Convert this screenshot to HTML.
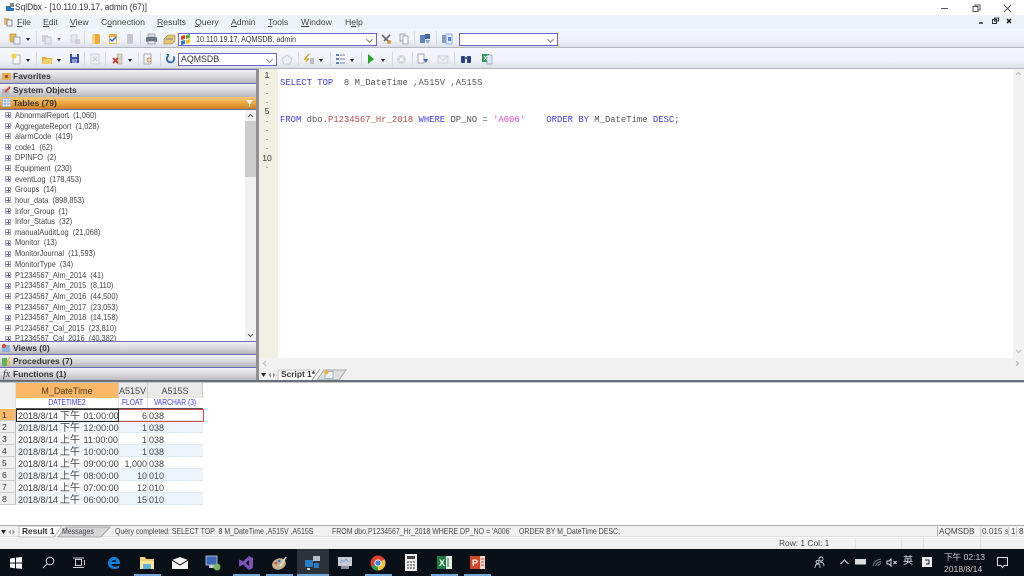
<!DOCTYPE html>
<html><head><meta charset="utf-8"><title>SqlDbx</title>
<style>
html,body{margin:0;padding:0;background:#fff;width:1024px;height:576px;overflow:hidden}
body{position:relative;font-family:"Liberation Sans","Noto Sans CJK TC",sans-serif;font-size:8.6px;color:#444;filter:blur(.35px)}
div,span,svg{box-sizing:border-box}
.a{position:absolute}
.t{position:absolute;white-space:pre;line-height:11px;height:11px}
.sl{transform-origin:left center}
.hd{position:absolute;left:0;width:256px;height:14px;background:linear-gradient(#f2f2f4,#d6d6da 55%,#b4b4ba);border-bottom:1px solid #6f6ab8;font-weight:bold;font-size:8.5px;color:#333;line-height:13px;padding-left:13px}
.ic{position:absolute;left:2px;top:2px;width:9px;height:9px}
.tr{position:absolute;left:15px;white-space:pre;line-height:11px;height:11px;color:#444;font-size:8.4px;transform:scaleX(.885);transform-origin:left center}
.ex{position:absolute;left:5px;width:6px;height:6px;border:1px solid #aaa;background:#f4f4f4}
.ex:after{content:"";position:absolute;left:1.500px;top:0;width:1px;height:4px;background:#668}
.ex:before{content:"";position:absolute;left:0;top:1.500px;width:4px;height:1px;background:#668}
.m{position:absolute;top:17px;line-height:11px;font-size:8.7px;color:#444;white-space:pre}
.m u{text-decoration:underline}
.bar{position:absolute;left:0;width:1024px;background:linear-gradient(#f3f6fb,#f0f3f9 60%,#dde0e6)}
.sep{position:absolute;width:1px;height:14px;background:#d5d8de}
.combo{position:absolute;background:#fff;border:1px solid #6a62cc;height:13px;line-height:11px;padding-left:3px;font-size:8.4px;color:#333;white-space:pre}
.combo:after{content:"";position:absolute;right:4px;top:3px;width:4px;height:4px;border-right:1px solid #888;border-bottom:1px solid #888;transform:rotate(45deg)}
.dd{position:absolute;width:0;height:0;border-left:2.5px solid transparent;border-right:2.5px solid transparent;border-top:3px solid #222}
.i{position:absolute}
pre{position:absolute;margin:0;font-family:"Liberation Mono",monospace;font-size:8.9px;line-height:11px;color:#555;white-space:pre}
.k{color:#3f3fe0}.r{color:#b24a4a}.s{color:#e04ad8}
.ln{position:absolute;left:259px;width:20px;text-align:center;font-size:8.6px;color:#333;line-height:10px;padding-right:4px}
.c{position:absolute;font-size:9px;color:#444;line-height:12px;height:12px;white-space:pre;font-family:"Liberation Sans","Noto Sans CJK TC",sans-serif}
.c b{font-weight:normal;font-size:10px;margin:0 1px 0 2px}
.ty{color:#3a3ae8;font-size:7.8px;transform:scaleX(.86)}
.rw{position:absolute;left:16px;width:187px;height:12px;border-bottom:1px solid #dfe6ee}
.rh{position:absolute;left:0;width:16px;height:12px;background:#efefef;border-bottom:1px solid #ccc;border-right:1px solid #bbb;font-size:8.6px;color:#333;line-height:13px;padding-left:2px}
.ul{position:absolute;top:574px;height:2px;background:#6fa8d8}
.st{font-size:8.2px;transform:scaleX(.85);transform-origin:left center}
</style></head><body>

<!-- title bar -->
<svg class="i" style="left:5px;top:2px" width="11" height="11"><rect x="5" y="1" width="4" height="4" fill="#888"/><rect x="1" y="4" width="5" height="5" fill="#2a70c0"/><rect x="6" y="6" width="3" height="3" fill="#2a70c0"/></svg>
<div class="t sl" style="left:15px;top:2px;font-size:9.3px;color:#333;transform:scaleX(.9)">SqlDbx - [10.110.19.17, admin (67)]</div>
<svg class="i" style="left:930px;top:2px" width="94" height="12" fill="none" stroke="#555" stroke-width="1"><path d="M11 6.500h7"/><path d="M43 4.500h5v5h-5z M45 4.500v-1.500h5v5h-2" /><path d="M74 3l7 7M81 3l-7 7"/></svg>

<!-- menu bar -->
<div class="a" style="left:0;top:15px;width:1024px;height:14px;background:#eef3fa"></div>
<svg class="i" style="left:3px;top:17px" width="11" height="10"><rect x="1" y="1" width="5" height="7" fill="#e6b860"/><rect x="4" y="3" width="5" height="6" fill="#f4f4f4" stroke="#889"/></svg>
<div class="m" style="left:17px"><u>F</u>ile</div>
<div class="m" style="left:43px"><u>E</u>dit</div>
<div class="m" style="left:70px"><u>V</u>iew</div>
<div class="m" style="left:101px">C<u>o</u>nnection</div>
<div class="m" style="left:157px"><u>R</u>esults</div>
<div class="m" style="left:195px"><u>Q</u>uery</div>
<div class="m" style="left:231px"><u>A</u>dmin</div>
<div class="m" style="left:268px"><u>T</u>ools</div>
<div class="m" style="left:301px"><u>W</u>indow</div>
<div class="m" style="left:345px">H<u>e</u>lp</div>
<svg class="i" style="left:975px;top:17px" width="40" height="9"><path d="M4 6h4" stroke="#222" stroke-width="1.4"/><rect x="17.500" y="2.500" width="4" height="4" fill="none" stroke="#333"/><rect x="19.500" y="1" width="4" height="3" fill="none" stroke="#333"/><path d="M32 2l4 4M36 2l-4 4" stroke="#111" stroke-width="1.500"/></svg>

<!-- toolbar 1 -->
<div class="bar" style="top:29px;height:19px;border-bottom:1px solid #b5b8bf"></div>
<svg class="i" style="left:9px;top:33px" width="14" height="12"><rect x="1" y="1" width="6" height="8" fill="#e8b850" stroke="#b08a30" stroke-width=".6"/><rect x="5" y="4" width="6" height="7" fill="#f3f5f8" stroke="#7d93b8" stroke-width=".8"/></svg>
<div class="dd" style="left:26px;top:38px"></div>
<div class="sep" style="left:36px;top:31px"></div>
<svg class="i" style="left:41px;top:33px" width="12" height="12"><rect x="1" y="2" width="6" height="7" fill="#d0d4dc"/><rect x="4" y="4" width="6" height="7" fill="#e4e6ea" stroke="#b8bcc4" stroke-width=".7"/></svg>
<div class="dd" style="left:57px;top:38px;border-top-color:#777"></div>
<svg class="i" style="left:69px;top:33px" width="12" height="12"><rect x="2" y="2" width="6" height="7" fill="#e6e8ec" stroke="#c4c7cd" stroke-width=".7"/><rect x="6" y="6" width="5" height="5" fill="#ced1d6"/></svg>
<div class="sep" style="left:84px;top:31px"></div>
<svg class="i" style="left:90px;top:33px" width="12" height="12"><rect x="2" y="1" width="8" height="10" rx="2" fill="#e9ac3a"/><rect x="2" y="1" width="3" height="10" rx="1" fill="#f6d37e"/></svg>
<svg class="i" style="left:107px;top:33px" width="12" height="12"><rect x="2" y="1" width="8" height="10" rx="1" fill="#e6b040"/><rect x="3" y="4" width="6" height="6" fill="#eef2fa"/><path d="M3 6l2 2 4-4" stroke="#3060c0" stroke-width="1.400" fill="none"/></svg>
<svg class="i" style="left:125px;top:33px" width="10" height="12"><rect x="2" y="1" width="6" height="10" rx="1" fill="#c4c7cd"/></svg>
<div class="sep" style="left:140px;top:31px"></div>
<svg class="i" style="left:145px;top:33px" width="13" height="12"><rect x="3" y="1" width="7" height="3" fill="#dfe1e5" stroke="#778" stroke-width=".6"/><rect x="1" y="4" width="11" height="5" rx="1" fill="#6e7480"/><rect x="3" y="8" width="7" height="3" fill="#eee" stroke="#778" stroke-width=".6"/></svg>
<svg class="i" style="left:163px;top:33px" width="13" height="12"><path d="M1 6l4-4h7v6l-3 3H1z" fill="#e6c470" stroke="#a08a50" stroke-width=".6"/><path d="M3 6h7" stroke="#889"/></svg>
<div class="combo" style="left:178px;top:33px;width:199px;padding-left:17px"><span style="display:inline-block;transform:scaleX(.86);transform-origin:left center">10.110.19.17, AQMSDB, admin</span></div>
<svg class="i" style="left:180px;top:34px" width="11" height="11"><path d="M1 2l4-1v4l-4 1z" fill="#e0442c"/><path d="M6 1l4-1v4l-4 1z" fill="#5eb030"/><path d="M1 7l4-1v4l-4 1z" fill="#2c78d8"/><path d="M6 6l4-1v4l-4 1z" fill="#f0c020"/></svg>
<svg class="i" style="left:380px;top:33px" width="13" height="12"><path d="M2 2l8 8M10 2l-6 6" stroke="#667" stroke-width="1.600"/><circle cx="9" cy="9" r="2" fill="#c9a040"/></svg>
<svg class="i" style="left:398px;top:33px" width="12" height="12"><rect x="2" y="1" width="5" height="7" fill="#eee" stroke="#889" stroke-width=".7"/><rect x="5" y="3" width="5" height="8" fill="#fbfbfb" stroke="#889" stroke-width=".7"/></svg>
<div class="sep" style="left:414px;top:31px"></div>
<svg class="i" style="left:419px;top:33px" width="12" height="12"><rect x="1" y="2" width="5" height="8" fill="#5f84c4"/><rect x="6" y="1" width="5" height="5" fill="#3f68b0"/><path d="M6 7l3 4 2-4z" fill="#8aa6d8"/></svg>
<div class="sep" style="left:436px;top:31px"></div>
<svg class="i" style="left:441px;top:33px" width="12" height="12"><rect x="1" y="2" width="5" height="8" fill="#7a9ad0"/><rect x="5" y="1" width="6" height="10" fill="#dfe7f5" stroke="#7a9ad0" stroke-width=".7"/><path d="M7 4h3v4H7z" fill="#5f84c4"/></svg>
<div class="combo" style="left:459px;top:33px;width:99px"></div>

<!-- toolbar 2 -->
<div class="bar" style="top:48px;height:21px;border-bottom:1px solid #b5b8bf"></div>
<svg class="i" style="left:10px;top:53px" width="13" height="12"><rect x="3" y="2" width="7" height="9" fill="#f5f6f8" stroke="#99a" stroke-width=".7"/><circle cx="4" cy="3" r="2.500" fill="#f4d040"/></svg>
<div class="dd" style="left:26px;top:59px"></div>
<div class="sep" style="left:36px;top:52px"></div>
<svg class="i" style="left:41px;top:53px" width="13" height="12"><path d="M1 4h4l1 1h5v6H1z" fill="#e2b040"/><path d="M3 6h9l-2 5H1z" fill="#f2d070"/></svg>
<div class="dd" style="left:57px;top:59px"></div>
<svg class="i" style="left:69px;top:53px" width="11" height="11"><rect x="1" y="1" width="9" height="9" fill="#3c4fa8"/><rect x="3" y="1" width="5" height="3" fill="#dfe4f2"/><rect x="3" y="6" width="5" height="4" fill="#8c9ad0"/></svg>
<div class="sep" style="left:84px;top:52px"></div>
<svg class="i" style="left:90px;top:53px" width="10" height="12"><rect x="1" y="1" width="8" height="10" fill="#eceef2" stroke="#c8cbd2" stroke-width=".7"/><path d="M3 4l4 4M7 4l-4 4" stroke="#ccc"/></svg>
<div class="sep" style="left:105px;top:52px"></div>
<svg class="i" style="left:112px;top:53px" width="12" height="12"><rect x="5" y="1" width="5" height="10" fill="#d6d2c4" stroke="#998" stroke-width=".5"/><path d="M1 5l5 5M6 5l-5 5" stroke="#d83020" stroke-width="1.600"/></svg>
<div class="dd" style="left:128px;top:59px"></div>
<div class="sep" style="left:138px;top:52px"></div>
<svg class="i" style="left:142px;top:53px" width="12" height="12"><rect x="2" y="1" width="7" height="10" fill="#f8f8fa" stroke="#889" stroke-width=".7"/><circle cx="7" cy="7" r="2" fill="#dfe8f4" stroke="#c09030"/></svg>
<div class="sep" style="left:160px;top:52px"></div>
<svg class="i" style="left:165px;top:53px" width="11" height="11" fill="none"><path d="M8.500 3.500A3.700 3.700 0 1 1 3 3" stroke="#2a64c0" stroke-width="1.800"/><path d="M1 1l3 0 0 3z" fill="#2a64c0"/></svg>
<div class="combo" style="left:178px;top:53px;width:99px;font-size:8.8px;padding-left:2px">AQMSDB</div>
<svg class="i" style="left:281px;top:54px" width="13" height="11"><path d="M6 1l5 4-2 5H3L1 5z" fill="#eceef2" stroke="#c9ccd2"/></svg>
<div class="sep" style="left:298px;top:52px"></div>
<svg class="i" style="left:303px;top:53px" width="13" height="12"><path d="M6 1L2 6h3L3 9" stroke="#e0a820" stroke-width="1.500" fill="none"/><path d="M7 6h4M7 8h4M7 10h4" stroke="#889"/></svg>
<div class="dd" style="left:319px;top:59px"></div>
<div class="sep" style="left:330px;top:52px"></div>
<svg class="i" style="left:335px;top:53px" width="11" height="12"><rect x="1" y="1" width="3" height="2" fill="#5a80c0"/><rect x="1" y="5" width="3" height="2" fill="#5a80c0"/><rect x="1" y="9" width="3" height="2" fill="#5a80c0"/><path d="M5 2h5M5 6h5M5 10h5" stroke="#aab" stroke-width="1.500"/></svg>
<div class="dd" style="left:350px;top:59px"></div>
<div class="sep" style="left:361px;top:52px"></div>
<svg class="i" style="left:366px;top:53px" width="10" height="12"><path d="M2 1l6 5-6 5z" fill="#2aa02a"/></svg>
<div class="dd" style="left:381px;top:59px"></div>
<div class="sep" style="left:392px;top:52px"></div>
<svg class="i" style="left:396px;top:54px" width="11" height="11"><circle cx="5.500" cy="5.500" r="4.500" fill="#d5d6da"/><path d="M3.500 3.500l4 4M7.500 3.500l-4 4" stroke="#fff"/></svg>
<div class="sep" style="left:412px;top:52px"></div>
<svg class="i" style="left:417px;top:53px" width="12" height="12"><rect x="1" y="1" width="6" height="9" fill="#f8f8fb" stroke="#889" stroke-width=".7"/><path d="M6 6l5 0-2 4z" fill="#3a6cb8"/></svg>
<svg class="i" style="left:437px;top:54px" width="12" height="11"><rect x="1" y="2" width="10" height="7" fill="#eceef2" stroke="#cfd2d8"/><path d="M1 2l5 4 5-4" stroke="#d5d8de" fill="none"/></svg>
<div class="sep" style="left:454px;top:52px"></div>
<svg class="i" style="left:460px;top:54px" width="12" height="10"><rect x="1" y="2" width="4" height="7" rx="1" fill="#2a4080"/><rect x="7" y="2" width="4" height="7" rx="1" fill="#2a4080"/><rect x="4" y="3" width="4" height="2" fill="#405aa0"/></svg>
<svg class="i" style="left:481px;top:53px" width="12" height="12"><rect x="1" y="1" width="7" height="8" fill="#2f9a4a"/><rect x="6" y="2" width="5" height="9" fill="#dfe6f4" stroke="#7d93b8" stroke-width=".6"/><path d="M3 3l3 4M6 3l-3 4" stroke="#fff" stroke-width=".8"/></svg>

<!-- left panel -->
<div class="a" style="left:0;top:69px;width:256px;height:1px;background:#6f6ab8"></div>
<div class="hd" style="top:70px">Favorites<svg class="ic" viewBox="0 0 9 9"><rect x="0" y="1" width="9" height="7" fill="#dcb050"/><circle cx="4.500" cy="4.500" r="1.500" fill="#b03030"/></svg></div>
<div class="hd" style="top:84px">System Objects<svg class="ic" viewBox="0 0 9 9"><rect x="0" y="3" width="7" height="6" fill="#b4b8c4"/><path d="M3 6l5-5" stroke="#d84830" stroke-width="2"/></svg></div>
<div class="hd" style="top:97px;height:13px;background:linear-gradient(#f7c878,#eaa038 60%,#c88020);border-bottom:1px solid #6f6ab8;line-height:12px">Tables (79)<svg class="ic" style="top:1px" viewBox="0 0 9 9"><rect x="0" y="0" width="9" height="9" fill="#fff" stroke="#7a90c0"/><path d="M0 3h9M0 6h9M3 0v9M6 0v9" stroke="#7a90c0" stroke-width=".7"/></svg><svg class="a" style="left:246px;top:3px" width="7" height="7"><path d="M0 0h7L4 4v3H3V4z" fill="#f4f4f4"/></svg></div>

<div class="a" style="left:0;top:110px;width:256px;height:231px;overflow:hidden;background:#fff">
<div class="ex" style="top:2px"></div><div class="tr" style="top:0px">AbnormalReport  (1,060)</div>
<div class="ex" style="top:13px"></div><div class="tr" style="top:11px">AggregateReport  (1,028)</div>
<div class="ex" style="top:23px"></div><div class="tr" style="top:21px">alarmCode  (419)</div>
<div class="ex" style="top:34px"></div><div class="tr" style="top:32px">code1  (62)</div>
<div class="ex" style="top:45px"></div><div class="tr" style="top:42px">DPINFO  (2)</div>
<div class="ex" style="top:55px"></div><div class="tr" style="top:53px">Equipment  (230)</div>
<div class="ex" style="top:66px"></div><div class="tr" style="top:64px">eventLog  (178,453)</div>
<div class="ex" style="top:77px"></div><div class="tr" style="top:74px">Groups  (14)</div>
<div class="ex" style="top:87px"></div><div class="tr" style="top:85px">hour_data  (898,853)</div>
<div class="ex" style="top:98px"></div><div class="tr" style="top:96px">Infor_Group  (1)</div>
<div class="ex" style="top:109px"></div><div class="tr" style="top:106px">Infor_Status  (32)</div>
<div class="ex" style="top:119px"></div><div class="tr" style="top:117px">manualAuditLog  (21,068)</div>
<div class="ex" style="top:130px"></div><div class="tr" style="top:127px">Monitor  (13)</div>
<div class="ex" style="top:141px"></div><div class="tr" style="top:138px">MonitorJournal  (11,593)</div>
<div class="ex" style="top:151px"></div><div class="tr" style="top:149px">MonitorType  (34)</div>
<div class="ex" style="top:162px"></div><div class="tr" style="top:160px">P1234567_Alm_2014  (41)</div>
<div class="ex" style="top:173px"></div><div class="tr" style="top:170px">P1234567_Alm_2015  (8,110)</div>
<div class="ex" style="top:183px"></div><div class="tr" style="top:181px">P1234567_Alm_2016  (44,500)</div>
<div class="ex" style="top:194px"></div><div class="tr" style="top:192px">P1234567_Alm_2017  (23,053)</div>
<div class="ex" style="top:205px"></div><div class="tr" style="top:202px">P1234567_Alm_2018  (14,158)</div>
<div class="ex" style="top:215px"></div><div class="tr" style="top:213px">P1234567_Cal_2015  (23,810)</div>
<div class="ex" style="top:226px"></div><div class="tr" style="top:223px">P1234567_Cal_2016  (40,382)</div>
<!-- tree scrollbar -->
<div class="a" style="left:245px;top:0;width:11px;height:231px;background:#f1f1f1"></div>
<div class="a" style="left:245px;top:11px;width:11px;height:56px;background:#cdcdcd"></div>
<svg class="a" style="left:247px;top:3px" width="7" height="5" fill="none" stroke="#555"><path d="M1 4l2.500-2.500L6 4"/></svg>
<svg class="a" style="left:247px;top:223px" width="7" height="5" fill="none" stroke="#555"><path d="M1 1l2.500 2.500L6 1"/></svg>
</div>

<div class="hd" style="top:341px;height:14px;border-top:1px solid #6f6ab8">Views  (0)<svg class="ic" viewBox="0 0 9 9"><rect x="0" y="1" width="8" height="7" fill="#8fb0dc"/><circle cx="2" cy="2" r="2" fill="#d84830"/></svg></div>
<div class="hd" style="top:355px;height:13px">Procedures  (7)<svg class="ic" viewBox="0 0 9 9"><rect x="0" y="1" width="5" height="8" fill="#60b060"/><path d="M8 0L5 5h3L6 9" stroke="#e0b020" fill="none"/></svg></div>
<div class="hd" style="top:368px;height:13px;border-bottom:none">Functions  (1)<span class="a" style="left:3px;top:0;font-family:'Liberation Serif',serif;font-style:italic;font-size:10px;font-weight:normal">fx</span></div>

<!-- splitter -->
<div class="a" style="left:256px;top:69px;width:3px;height:312px;background:#8e9096"></div>

<!-- gutter + editor -->
<div class="a" style="left:259px;top:69px;width:19px;height:289px;background:#f2f0e1"></div>
<div class="ln" style="top:70px">1</div>
<div class="ln" style="top:79px">&middot;</div>
<div class="ln" style="top:88px">&middot;</div>
<div class="ln" style="top:97px">&middot;</div>
<div class="ln" style="top:106px">5</div>
<div class="ln" style="top:116px">&middot;</div>
<div class="ln" style="top:125px">&middot;</div>
<div class="ln" style="top:134px">&middot;</div>
<div class="ln" style="top:143px">&middot;</div>
<div class="ln" style="top:153px">10</div>
<div class="ln" style="top:162px">&middot;</div>
<pre style="left:280px;top:78px"><span class="k">SELECT TOP</span>  8 M_DateTime ,A515V ,A515S</pre>
<pre style="left:280px;top:115px"><span class="k">FROM</span> dbo.<span class="r">P1234567_Hr_2018</span> <span class="k">WHERE</span> DP_NO = <span class="s">'A006'</span>    <span class="k">ORDER BY</span> M_DateTime <span class="k">DESC</span>;</pre>

<!-- editor scrollbars -->
<div class="a" style="left:1013px;top:69px;width:11px;height:289px;background:#f2f2f2"></div>
<svg class="a" style="left:1015px;top:71px" width="7" height="5" fill="none" stroke="#bbb"><path d="M1 4l2.500-2.500L6 4"/></svg>
<svg class="a" style="left:1015px;top:349px" width="7" height="5" fill="none" stroke="#bbb"><path d="M1 1l2.500 2.500L6 1"/></svg>
<div class="a" style="left:259px;top:358px;width:765px;height:11px;background:#f2f2f2"></div>
<svg class="a" style="left:262px;top:360px" width="5" height="7" fill="none" stroke="#bbb"><path d="M4 1L1.500 3.500 4 6"/></svg>
<svg class="a" style="left:1015px;top:360px" width="5" height="7" fill="none" stroke="#bbb"><path d="M1 1l2.500 2.500L1 6"/></svg>

<!-- script tabs -->
<div class="a" style="left:259px;top:369px;width:765px;height:11px;background:#f0f0f0"></div>
<svg class="a" style="left:259px;top:369px" width="120" height="12"><path d="M2 4h5L4.500 8z" fill="#222"/><path d="M12 3.500L9.500 6 12 8.500z" fill="#999"/><path d="M14 3.500L16.500 6 14 8.500z" fill="#999"/><path d="M19 0H62l-8 11H19z" fill="#fff"/><path d="M19 11V2l1-1h37" fill="none" stroke="#bbb"/><path d="M61 0l-8 11" stroke="#999" fill="none"/><path d="M58 11l7-10h22l-7 10z" fill="#dfdfe2" stroke="#aaa"/><rect x="66" y="2.500" width="8" height="7" fill="#f0f4fa" stroke="#7d93b8" stroke-width=".6"/><circle cx="67.500" cy="3.500" r="2" fill="#f0b030"/></svg>
<div class="t" style="left:281px;top:369px;font-weight:bold;font-size:8.4px;color:#333">Script 1*</div>

<!-- divider -->
<div class="a" style="left:0;top:380px;width:1024px;height:2px;background:#6a7078"></div>
<div class="a" style="left:0;top:382px;width:1024px;height:1px;background:#c8c8c8"></div>

<!-- grid -->
<div class="a" style="left:0;top:383px;width:16px;height:25px;background:#efefef;border-right:1px solid #ddd"></div>
<div class="a" style="left:16px;top:383px;width:102px;height:15px;background:#fbb868"></div>
<div class="a" style="left:118px;top:383px;width:29px;height:15px;background:#eaeaea;border-left:1px solid #ccc"></div>
<div class="a" style="left:147px;top:383px;width:56px;height:15px;background:#eaeaea;border-left:1px solid #ccc;border-right:1px solid #ccc"></div>
<div class="c" style="left:16px;top:385px;width:102px;text-align:center;color:#4a3a20">M_DateTime</div>
<div class="c" style="left:118px;top:385px;width:29px;text-align:center">A515V</div>
<div class="c" style="left:147px;top:385px;width:56px;text-align:center">A515S</div>
<div class="c ty" style="left:16px;top:397px;width:102px;text-align:center">DATETIME2</div>
<div class="c ty" style="left:118px;top:397px;width:29px;text-align:center">FLOAT</div>
<div class="c ty" style="left:147px;top:397px;width:56px;text-align:center">VARCHAR (3)</div>
<div class="a" style="left:118px;top:398px;width:1px;height:10px;background:#ddd"></div>
<div class="a" style="left:147px;top:398px;width:1px;height:10px;background:#ddd"></div>
<div class="a" style="left:16px;top:408px;width:187px;height:1px;background:#555"></div>

<div class="rw" style="top:409px;background:#fff"></div>
<div class="rw" style="top:421px;background:#edf5fc"></div>
<div class="rw" style="top:433px;background:#fff"></div>
<div class="rw" style="top:445px;background:#edf5fc"></div>
<div class="rw" style="top:457px;background:#fff"></div>
<div class="rw" style="top:469px;background:#edf5fc"></div>
<div class="rw" style="top:481px;background:#fff"></div>
<div class="rw" style="top:493px;background:#edf5fc"></div>
<div class="a" style="left:16px;top:421px;width:103px;height:84px;background:#f7f7f7;opacity:.65"></div>
<div class="a" style="left:118px;top:409px;width:1px;height:96px;background:#dde3ea"></div>
<div class="a" style="left:147px;top:409px;width:1px;height:96px;background:#dde3ea"></div>
<div class="a" style="left:118px;top:409px;width:86px;height:13px;border:1px solid #d84848;border-left:none"></div>
<div class="a" style="left:16px;top:409px;width:103px;height:13px;border:1.500px solid #222"></div>

<div class="rh" style="top:409px;background:#fbb868">1</div>
<div class="rh" style="top:421px">2</div>
<div class="rh" style="top:433px">3</div>
<div class="rh" style="top:445px">4</div>
<div class="rh" style="top:457px">5</div>
<div class="rh" style="top:469px">6</div>
<div class="rh" style="top:481px">7</div>
<div class="rh" style="top:493px">8</div>

<div class="c" style="left:18px;top:410px">2018/8/14<b>下午</b> 01:00:00</div>
<div class="c" style="left:18px;top:422px">2018/8/14<b>下午</b> 12:00:00</div>
<div class="c" style="left:18px;top:434px">2018/8/14<b>上午</b> 11:00:00</div>
<div class="c" style="left:18px;top:446px">2018/8/14<b>上午</b> 10:00:00</div>
<div class="c" style="left:18px;top:458px">2018/8/14<b>上午</b> 09:00:00</div>
<div class="c" style="left:18px;top:470px">2018/8/14<b>上午</b> 08:00:00</div>
<div class="c" style="left:18px;top:482px">2018/8/14<b>上午</b> 07:00:00</div>
<div class="c" style="left:18px;top:494px">2018/8/14<b>上午</b> 06:00:00</div>

<div class="c" style="left:118px;top:410px;width:29px;text-align:right">6</div>
<div class="c" style="left:118px;top:422px;width:29px;text-align:right">1</div>
<div class="c" style="left:118px;top:434px;width:29px;text-align:right">1</div>
<div class="c" style="left:118px;top:446px;width:29px;text-align:right">1</div>
<div class="c" style="left:118px;top:458px;width:29px;text-align:right">1,000</div>
<div class="c" style="left:118px;top:470px;width:29px;text-align:right">10</div>
<div class="c" style="left:118px;top:482px;width:29px;text-align:right">12</div>
<div class="c" style="left:118px;top:494px;width:29px;text-align:right">15</div>

<div class="c" style="left:149px;top:410px">038</div>
<div class="c" style="left:149px;top:422px">038</div>
<div class="c" style="left:149px;top:434px">038</div>
<div class="c" style="left:149px;top:446px">038</div>
<div class="c" style="left:149px;top:458px">038</div>
<div class="c" style="left:149px;top:470px">010</div>
<div class="c" style="left:149px;top:482px">010</div>
<div class="c" style="left:149px;top:494px">010</div>

<!-- result tabs / message bar -->
<div class="a" style="left:0;top:525px;width:1024px;height:1px;background:#a8a8a8"></div>
<div class="a" style="left:0;top:526px;width:1024px;height:11px;background:#f2f2f2;border-bottom:1px solid #e0e0e0"></div>
<svg class="a" style="left:0;top:526px" width="112" height="12"><path d="M1 4h5L3.500 8z" fill="#222"/><path d="M11 3.500L8.500 6 11 8.500z" fill="#999"/><path d="M12.500 3.500L15 6 12.500 8.500z" fill="#999"/><path d="M19 0V11H54L62 0z" fill="#fff" stroke="#bbb"/><path d="M58 11l8-10h44l-9 10z" fill="#d6d6d8" stroke="#aaa"/></svg>
<div class="t" style="left:22px;top:526px;font-weight:bold;font-size:8.4px;color:#333">Result 1</div>
<div class="t st" style="left:62px;top:526px">Messages</div>
<div class="t st" style="left:115px;top:526px">Query completed: SELECT TOP  8 M_DateTime ,A515V ,A515S</div>
<div class="t st" style="left:332px;top:526px">FROM dbo.P1234567_Hr_2018 WHERE DP_NO = 'A006'</div>
<div class="t st" style="left:519px;top:526px">ORDER BY M_DateTime DESC;</div>
<div class="a" style="left:937px;top:527px;width:1px;height:9px;background:#aaa"></div>
<div class="t" style="left:939px;top:526px;font-size:8.2px">AQMSDB</div>
<div class="a" style="left:969px;top:527px;width:1px;height:9px;background:#ccc"></div>
<div class="a" style="left:980px;top:527px;width:1px;height:9px;background:#ccc"></div>
<div class="t" style="left:982px;top:526px;font-size:8.2px">0.015 s</div>
<div class="a" style="left:1008px;top:527px;width:1px;height:9px;background:#ccc"></div>
<div class="t" style="left:1011px;top:526px;font-size:8.2px">1</div>
<div class="a" style="left:1016px;top:527px;width:1px;height:9px;background:#ccc"></div>
<div class="t" style="left:1019px;top:526px;font-size:8.2px">8</div>

<!-- status bar -->
<div class="a" style="left:0;top:538px;width:1024px;height:11px;background:#f0f0f0"></div>
<div class="t" style="left:779px;top:538px;font-size:8.4px">Row: 1 Col: 1</div>
<div class="a" style="left:855px;top:538px;width:1px;height:11px;background:#e3e3e3"></div>
<div class="a" style="left:901px;top:538px;width:1px;height:11px;background:#e3e3e3"></div>
<div class="a" style="left:923px;top:538px;width:1px;height:11px;background:#e3e3e3"></div>
<div class="a" style="left:980px;top:538px;width:1px;height:11px;background:#e3e3e3"></div>

<!-- taskbar -->
<div class="a" style="left:0;top:549px;width:1024px;height:27px;background:#0a1018"></div>
<div class="a" style="left:297px;top:549px;width:32px;height:27px;background:#2c3238"></div>
<div class="ul" style="left:134px;width:27px"></div>
<div class="ul" style="left:233px;width:27px"></div>
<div class="ul" style="left:266px;width:27px"></div>
<div class="ul" style="left:297px;width:32px"></div>
<div class="ul" style="left:365px;width:27px"></div>
<div class="ul" style="left:431px;width:27px"></div>
<div class="ul" style="left:464px;width:27px"></div>

<svg class="i" style="left:10px;top:557px" width="12" height="12"><path d="M0 1.500l5-.8V5.500H0zM6 .6L12 0V5.500H6zM0 6.500h5v4.800l-5-.8zM6 6.500h6V12l-6-.8z" fill="#fff"/></svg>
<svg class="i" style="left:42px;top:556px" width="13" height="13" fill="none" stroke="#ddd"><circle cx="8" cy="5" r="3.800"/><path d="M5 8l-4 4"/></svg>
<svg class="i" style="left:73px;top:557px" width="13" height="12" fill="none" stroke="#ccc"><rect x="2.500" y="2.500" width="6" height="6"/><path d="M0 1h11M0 10.500h11M11.500 3v5"/></svg>
<svg class="i" style="left:107px;top:556px" width="14" height="14"><path d="M1 7.500C1 3 4 1 7 1c4 0 6 3 6 7H4.500c.2 3 4.500 3.500 7.500 1.500V12c-4 2-11 1-11-4.500zM4.500 5.800h5C9.500 3.500 5 3.500 4.500 5.800z" fill="#0f7fdc"/></svg>
<svg class="i" style="left:139px;top:555px" width="16" height="15"><path d="M1 2h5l1 2h8v10H1z" fill="#f4d070"/><rect x="1" y="6" width="14" height="8" fill="#f9e49c"/><rect x="4" y="9" width="8" height="5" fill="#5fb4dc"/></svg>
<svg class="i" style="left:172px;top:557px" width="16" height="12"><path d="M0 3L8 0l8 3v9H0z" fill="#f4f4f4"/><path d="M0 3l8 5 8-5" fill="none" stroke="#0a1018"/></svg>
<svg class="i" style="left:205px;top:555px" width="16" height="16"><rect x="1" y="1" width="11" height="9" fill="#3a68b8" stroke="#c8d0dc" stroke-width=".8"/><rect x="4" y="10" width="8" height="3" fill="#c8c8d0"/><circle cx="12" cy="12" r="3.500" fill="#7ab060"/></svg>
<svg class="i" style="left:238px;top:555px" width="16" height="16"><path d="M11 1l4 2v10l-4 2-6-5.500-3 2L1 11V5l1-.5 3 2zM11 5L7.800 8l3.200 3z" fill="#7a52b8"/></svg>
<svg class="i" style="left:271px;top:555px" width="16" height="16"><ellipse cx="8" cy="9" rx="7" ry="5.500" fill="#c8b48a" transform="rotate(-20 8 9)"/><circle cx="5" cy="8" r="1.300" fill="#d04030"/><circle cx="8" cy="6" r="1.300" fill="#3a70c0"/><circle cx="11" cy="8" r="1.300" fill="#50a050"/><path d="M9 11l6-9" stroke="#e8e8e8" stroke-width="1.500"/></svg>
<svg class="i" style="left:304px;top:555px" width="18" height="16"><rect x="9" y="1" width="7" height="5" fill="#b8bcc4"/><rect x="1" y="5" width="8" height="7" fill="#2a7cc8"/><rect x="10" y="8" width="5" height="5" fill="#2a7cc8"/><rect x="3" y="13" width="3" height="2" fill="#ccc"/></svg>
<svg class="i" style="left:337px;top:556px" width="16" height="14"><rect x="1" y="1" width="14" height="9" fill="#c8ccd4"/><path d="M3 7l2-3 2 2 2-3 3 3" stroke="#7fa0c8" fill="none"/><rect x="4" y="10" width="8" height="3" fill="#8a8e96"/></svg>
<svg class="i" style="left:370px;top:555px" width="16" height="16"><circle cx="8" cy="8" r="7.500" fill="#e04030"/><path d="M8 8L1.500 11.800A7.500 7.500 0 0 0 8 15.500z" fill="#30a050"/><path d="M8 8l6.500 -3.700A7.500 7.500 0 0 1 8 15.500z" fill="#f4c430"/><circle cx="8" cy="8" r="3.600" fill="#fff"/><circle cx="8" cy="8" r="2.700" fill="#3a80e0"/></svg>
<svg class="i" style="left:405px;top:554px" width="12" height="17"><rect x="0" y="0" width="12" height="17" fill="#eee"/><rect x="2" y="2" width="8" height="3" fill="#444"/><path d="M2 8h2M5 8h2M8 8h2M2 11h2M5 11h2M8 11h2M2 14h2M5 14h2M8 14h2" stroke="#333"/></svg>
<svg class="i" style="left:437px;top:555px" width="15" height="15"><rect x="4" y="1" width="11" height="13" fill="#e4efe6"/><rect x="0" y="1" width="9" height="13" fill="#1d7a42"/><text x="2" y="11" font-family="Liberation Sans" font-size="9" font-weight="bold" fill="#fff">X</text><path d="M11 3v9" stroke="#1d7a42"/></svg>
<svg class="i" style="left:470px;top:555px" width="15" height="15"><rect x="4" y="1" width="11" height="13" fill="#f0d8d0"/><rect x="0" y="1" width="10" height="13" fill="#d04828"/><text x="2" y="11" font-family="Liberation Sans" font-size="9" font-weight="bold" fill="#fff">P</text><path d="M11 4h3M11 7h3M11 10h3" stroke="#d04828"/></svg>

<svg class="i" style="left:814px;top:556px" width="11" height="13" fill="none" stroke="#ccc" stroke-width=".9"><circle cx="7" cy="3" r="2"/><circle cx="3.500" cy="6" r="1.500"/><path d="M1 12c0-3 1-4 3-4s2 1 2 4M6 6c2 0 4 1 4 4"/></svg>
<svg class="i" style="left:840px;top:559px" width="9" height="6" fill="none" stroke="#ddd"><path d="M.5 5L4.500 1 8.500 5"/></svg>
<svg class="i" style="left:855px;top:558px" width="12" height="8"><rect x="0" y="1" width="11" height="6" fill="#ddd"/><rect x="0" y="6" width="11" height="1" fill="#777"/></svg>
<svg class="i" style="left:872px;top:558px" width="11" height="9" fill="none" stroke="#888"><path d="M1 8c1-4 3-6 8-7M3.500 8c1-2 2-4 5.500-4.500M6 8c.5-1 1-2 3-2.500"/></svg>
<svg class="i" style="left:886px;top:558px" width="12" height="9" fill="none" stroke="#ddd"><path d="M1 3h2l2-2v7L3 6H1z"/><path d="M7.500 3l3 3M10.500 3l-3 3"/></svg>
<div class="t" style="left:903px;top:556px;font-size:10px;color:#eee;line-height:12px;height:12px">英</div>
<svg class="i" style="left:922px;top:557px" width="10" height="10"><rect x="0" y="0" width="10" height="10" fill="#eee"/><path d="M3 3h4v4H4" fill="none" stroke="#222"/></svg>
<div class="t" style="left:944px;top:551px;font-size:8.6px;color:#ccc;line-height:12px;height:12px">下午 02:13</div>
<div class="t" style="left:944px;top:563px;font-size:8.6px;color:#ccc;line-height:12px;height:12px">2018/8/14</div>
<svg class="i" style="left:996px;top:556px" width="13" height="13" fill="none" stroke="#ddd"><path d="M1.500 1.500h10v8H8l-1.500 2-1.500-2H1.500z"/></svg>

</body></html>
